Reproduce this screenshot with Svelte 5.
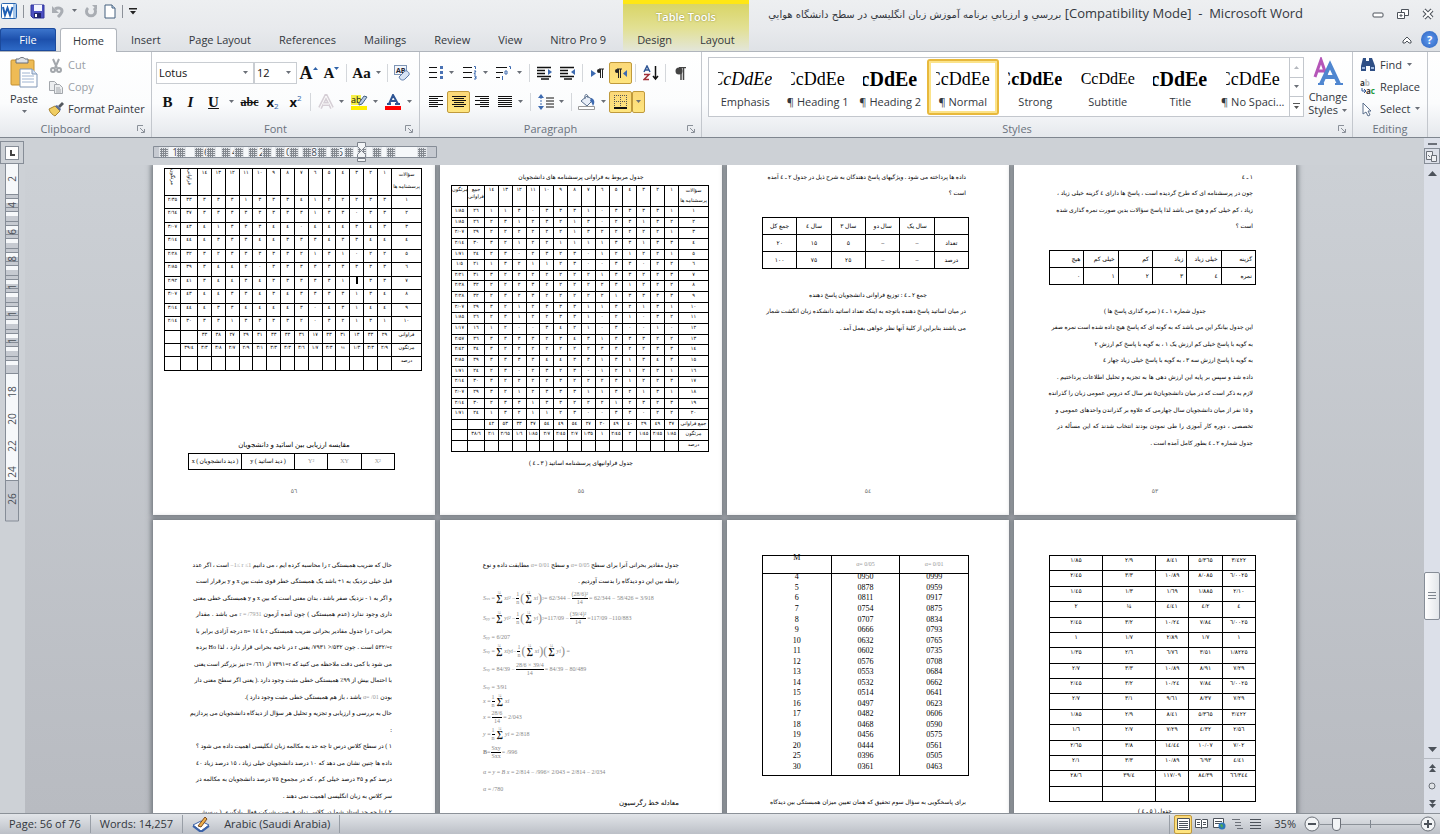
<script lang="ts">
	let zoom = $state(27);
	let fontName = $state('Lotus');
	let fontSize = $state('12');

	const tabs = ['Insert', 'Page Layout', 'References', 'Mailings', 'Review', 'View', 'Nitro Pro 9'];

	const styles = [
		{ name: 'Emphasis', look: 'italic' },
		{ name: '¶ Heading 1', look: '' },
		{ name: '¶ Heading 2', look: 'bold big' },
		{ name: '¶ Normal', look: '' },
		{ name: 'Strong', look: 'bold' },
		{ name: 'Subtitle', look: 'small' },
		{ name: 'Title', look: 'bold big' },
		{ name: '¶ No Spaci...', look: '' }
	];

	// columns run left to right, "-" is an empty cell
	const cells = (rows: string[]) => rows.map((r) => r.split(' ').map((c) => (c === '-' ? '' : c)));

	const students = cells([
		'٢/٣٥ ٣٣ ٣ ٣ ٣ ١ ٣ ٣ ٣ ٤ ١ ٢ ٢ ٢ ٣ ٣ ١',
		'٢/٦٤ ٣٧ ٣ ٣ ٣ ٣ ٣ ٣ ٣ ٣ ١ ٣ ٣ ٠ ٣ ٣ ٢',
		'٣/٠٧ ٤٣ ٤ ١ ٣ ٣ ٣ ٤ ٤ ٠ ٤ ٤ ٤ ٣ ٤ ٣ ٣',
		'٣/١٤ ٤٤ ٤ ٣ ٣ ٣ ٤ ٤ ٣ ٣ ٣ ٤ ٣ ٣ ٤ ٤ ٤',
		'٢/٢٨ ٣٢ ٣ ٢ ٣ ٣ ٣ ٣ ٣ ٢ ١ ٣ ١ ٠ ٢ ٢ ٥',
		'٢/٨٥ ٣٩ ٣ ٤ ٤ ٣ ٠ ٣ ٣ ٣ ٣ ٣ ٣ ٣ ٣ ٣ ٦',
		'٢/٩٢ ٤١ ٣ ٤ ٤ ٣ ٤ ٣ ٣ ٣ ٣ ٣ ١ | ٣ ٣ ٧',
		'٣/٠٧ ٤٣ ٤ ٤ ٣ ٣ ٤ ٣ ٤ ٣ ٣ ٣ ٣ ١ ٣ ٤ ٨',
		'٣/١٤ ٤٤ ٤ ٣ ٣ ٤ ٤ ٤ ٤ ٣ ٠ ٤ ٣ ١ ٤ ٤ ٩',
		'٢/١٤ ٣٠ ٣ ٣ ١ ٣ ٣ ٣ ٣ ٢ ٠ ٣ ٢ ١ ٣ ١ ١٠',
		'- - ٣٣ ٣٨ ٢٧ ٢٩ ٣١ ٣٣ ٣٣ ٣٦ ١٧ ٣٣ ٣١ ١٣ ٣٣ ٢٩ فراوانی',
		'- ٣٩/٤ ٣/٣ ٣/٨ ٢/٧ ٢/٩ ٣/١ ٣/٣ ٣/٣ ٣/٦ ١/٧ ٣/٣ ¼ ١/٣ ٣/٣ ٢/٩ مرتگون',
		'- - - - - - - - - - - - - - - - درصد'
	]);

	const teachers = cells([
		'١/٨٥ ٢٦ ١ ١ ٣ ٠ ٣ ٣ ٣ ١ ٠ ٣ ٣ ٣ ٣ ١ ١',
		'١/٨٥ ٢٦ ٢ ٣ ١ ٢ ٣ ٢ ١ ٣ ٠ ٢ ٣ ١ ٣ ٢ ٢',
		'٢/٠٧ ٢٩ ٢ ٢ ٢ ٢ ٢ ٢ ١ ٣ ٢ ٢ ٢ ٢ ٢ ١ ٣',
		'٢/١٤ ٣٠ ٣ ٢ ١ ٢ ٢ ١ ١ ١ ١ ٣ ٣ ١ ٣ ٣ ٤',
		'١/٧١ ٢٤ ٢ ٣ ٠ ٢ ٣ ٢ ٣ ٠ ١ ٢ ١ ٢ ٢ ١ ٥',
		'١/٥ ٢١ ١ ٣ ٢ ١ ١ ٢ ٣ ٠ ٠ ٣ ٣ ٠ ٢ ٢ ٦',
		'٢/٢١ ٣١ ٣ ٢ ٢ ٢ ٢ ٢ ٢ ٢ ١ ٣ ٣ ٢ ٢ ٣ ٧',
		'٢/٢٨ ٣٢ ٢ ٢ ٢ ٣ ٢ ٢ ٢ ٢ ٢ ٣ ١ ٢ ٢ ٢ ٨',
		'٢/٢٨ ٣٢ ٢ ٣ ٢ ٣ ٢ ٢ ٢ ٢ ٢ ١ ٣ ٣ ٣ ٣ ٩',
		'٢/٠٧ ٢٩ ٣ ٢ ١ ٢ ٣ ٣ ٣ ١ ١ ٣ ٢ ١ ٣ ١ ١٠',
		'١/٨٥ ٢٦ ٢ ٣ ١ ٢ ٢ ٣ ٣ ١ ٠ ٢ ١ ٠ ٣ ٢ ١١',
		'١/١٧ ١٦ ١ ٢ ٠ ٠ ٣ ٤ ٢ ١ ٠ ٣ ٠ ٠ ١ ٠ ١٢',
		'٢/٥٧ ٣٦ ٣ ٣ ٣ ٣ ٢ ٣ ٤ ٣ ١ ٣ ٣ ٣ ٢ ٢ ١٣',
		'٢/٤٢ ٣٤ ٣ ٢ ٢ ٢ ٢ ٢ ٢ ٢ ٣ ٣ ٢ ٢ ٣ ٣ ١٤',
		'٢/٨٥ ٣٩ ٣ ٣ ٣ ٣ ٤ ٤ ٣ ٣ ١ ٣ ١ ٣ ٤ ٣ ١٥',
		'١/٧١ ٢٤ ٢ ٣ ٠ ٢ ٣ ٢ ٣ ٠ ١ ٢ ١ ٢ ٢ ١ ١٦',
		'٢/١٤ ٣٠ ٣ ٢ ٢ ٢ ٢ ٣ ٢ ٢ ٢ ٣ ١ ٢ ٢ ٣ ١٧',
		'٢/٠٧ ٢٩ ٣ ٢ ١ ٢ ٣ ٣ ٣ ١ ١ ٣ ٢ ١ ٣ ١ ١٨',
		'٢/١٤ ٣٠ ٢ ٣ ٣ ١ ٣ ٣ ٢ ٢ ٢ ١ ٢ ٣ ٢ ٣ ١٩',
		'١/٧١ ٢٤ ١ ٣ ٢ ١ ١ ٢ ٣ ٠ ٠ ٣ ٣ ٠ ٢ ٢ ٢٠',
		'- - ٤٢ ٥٣ ٣٣ ٣٧ ٥٤ ٤٩ ٥٤ ٢٧ ٢٠ ٤٩ ٤٠ ٢٩ ٤٩ ٣٧ جمع_فراوانی',
		'- ٣٨/٦ ٢/١ ٢/٦٥ ١/٦ ١/٨٥ ٢/٧ ٢/٤٥ ٢/٧ ١/٣٥ ١ ٢/٤٥ ٢ ١/٤٥ ٢/٤٥ ١/٨٥ مرتگون',
		'- - - - - - - - - - - - - - - - درصد'
	]);

	const numbers = '١٤ ١٣ ١٢ ١١ ١٠ ٩ ٨ ٧ ٦ ٥ ٤ ٣ ٢ ١'.split(' ');

	const critical = cells([
		'4 0950 0999', '5 0878 0959', '6 0811 0917', '7 0754 0875', '8 0707 0834',
		'9 0666 0793', '10 0632 0765', '11 0602 0735', '12 0576 0708', '13 0553 0684',
		'14 0532 0662', '15 0514 0641', '16 0497 0623', '17 0482 0606', '18 0468 0590',
		'19 0456 0575', '20 0444 0561', '25 0396 0505', '30 0361 0463'
	]);

	const products = cells([
		'١/٨٥ ٢/٩ ٨/٤١ ٥/٣٦٥ ٣/٤٢٢',
		'٢/٤٥ ٣/٣ ١٠/٨٩ ٨/٠٨٥ ٦/٠٠٢٥',
		'١/٤٥ ١/٣ ١/٦٩ ١/٨٨٥ ٢/١٠',
		'٢ ¼ ٤/٤١ ٤/٢ ٤',
		'٢/٤٥ ٣/٢ ١٠/٢٤ ٧/٨٤ ٦/٠٠٢٥',
		'١ ١/٧ ٢/٨٩ ١/٧ ١',
		'١/٣٥ ٢/٦ ٦/٧٦ ٣/٥١ ١/٨٢٢٥',
		'٢/٧ ٣/٣ ١٠/٨٩ ٨/٩١ ٧/٢٩',
		'٢/٤٥ ٣/٢ ١٠/٢٤ ٧/٨٤ ٦/٠٠٢٥',
		'٢/٧ ٣/١ ٩/٦١ ٨/٣٧ ٧/٢٩',
		'١/٨٥ ٢/٩ ٨/٤١ ٥/٣٦٥ ٣/٤٢٢',
		'١/٦ ٢/٧ ٧/٢٩ ٤/٣٢ ٢/٥٦',
		'٢/٦٥ ٣/٨ ١٤/٤٤ ١٠/٠٧ ٧/٠٢',
		'٢/١ ٣/٣ ١٠/٨٩ ٦/٩٣ ٤/٤١',
		'٢٨/٦ ٣٩/٤ ١١٧/٠٩ ٨٤/٣٩ ٦٦/٣٤٤',
		'- - - - -'
	]);

	// horizontal ruler: column handles and the numbers between them
	const handles = [7, 24, 42, 54, 69, 82, 96, 110, 123, 137, 150, 165, 178, 192, 205, 220, 234, 265];
	const marks = [
		{ x: 22, t: '1' }, { x: 51, t: '16' }, { x: 79, t: '14' }, { x: 106, t: '12' },
		{ x: 133, t: '10' }, { x: 161, t: '8' }, { x: 187, t: '6' }
	];
	const steps = [
		{ y: 15, t: '2' }, { y: 41, t: '4' }, { y: 68, t: '6' }, { y: 95, t: '8' }, { y: 123, t: '1' },
		{ y: 150, t: '1' }, { y: 177, t: '1' }, { y: 228, t: '18' }, { y: 255, t: '20' },
		{ y: 282, t: '22' }, { y: 308, t: '24' }, { y: 335, t: '26' }
	];
	const stops = [30, 43, 57, 70, 84, 97, 111, 124, 138, 151, 165, 178, 192];
</script>

{#snippet arrow()}
	<svg class="arrow" width="7" height="4" viewBox="0 0 7 4"><path d="M1 0h5L3.5 3z" fill="#6b7078" /></svg>
{/snippet}

{#snippet launcher(label)}
	<button class="launcher" aria-label={label}>
		<svg width="8" height="8" viewBox="0 0 8 8" fill="none" stroke="#8a9099"><path d="M.5 6V.5H6M3 3l4 4M7.500 4v3.500H4" /></svg>
	</button>
{/snippet}

{#snippet bars(d)}
	<svg width="16" height="14" viewBox="0 0 16 14" stroke="#111"><path {d} /></svg>
{/snippet}

{#snippet grid(rows, kind)}
	<table class="grid wide {kind}">
		<colgroup>
			<col class="c16" /><col class="c17" />
			{#each numbers as _}<col />{/each}
			<col class="c30" />
		</colgroup>
		<thead>
			<tr>
				<th><span>مرتگون</span></th>
				<th><span>{kind === 'tall' ? 'فراوانی' : 'جمع فراوانی'}</span></th>
				{#each numbers as n}<th>{n}</th>{/each}
				<th class="last">سؤالات<br />پرسشنامه ها</th>
			</tr>
		</thead>
		<tbody>
			{#each rows as row}
				<tr>
					{#each row as c}
						<td>{#if c === '|'}<i class="caret"></i>{:else}{c.replace('_', ' ')}{/if}</td>
					{/each}
				</tr>
			{/each}
		</tbody>
	</table>
{/snippet}

{#snippet frac(a, b)}
	<span class="frac"><span>{a}</span><span>{b}</span></span>
{/snippet}

{#snippet sum()}
	<span class="sum"><small>14</small><b>∑</b><small>i=1</small></span>
{/snippet}

<div class="word">
	<header class="title">
		<div class="quick">
			<svg width="16" height="16" viewBox="0 0 16 16"><rect x=".5" y=".5" width="15" height="15" rx="1" fill="#fff" stroke="#2a66b0" /><path d="M12 1h3v14h-3z" fill="#a9c8ea" /><path d="M2 4l2 8 2.500-7L9 12l2.500-8" fill="none" stroke="#1f5fb4" stroke-width="2" /></svg>
			<i class="bar"></i>
			<button aria-label="Save"><svg width="15" height="15" viewBox="0 0 15 15"><path d="M1 1h13v13H3l-2-2z" fill="#4b4fc0" stroke="#32369c" /><path d="M4 1h8v6H4z" fill="#f4f6ff" /><path d="M4 9h7v5H4z" fill="#20246c" /><path d="M5 10h2v3H5z" fill="#fff" /></svg></button>
			<button aria-label="Undo"><svg width="14" height="13" viewBox="0 0 14 13" fill="none" stroke="#a9adb3" stroke-width="3"><path d="M4 4c3-2 7-1 7 2 0 2-2 4-4 6" /><path d="M1 1v7h7z" fill="#a9adb3" stroke="none" /></svg></button>
			{@render arrow()}
			<button aria-label="Redo"><svg width="14" height="13" viewBox="0 0 14 13" fill="none" stroke="#a9adb3" stroke-width="3"><path d="M4 3a4.500 4.500 0 1 0 6 0" /><path d="M8 0h5v5z" fill="#a9adb3" stroke="none" /></svg></button>
			<button aria-label="New"><svg width="12" height="15" viewBox="0 0 12 15"><path d="M1 1h7l3 3v10H1z" fill="#fff" stroke="#44617f" /><path d="M8 1v3h3" fill="#cfe0f4" stroke="#44617f" /></svg></button>
			<i class="bar"></i>
			<button aria-label="Customize"><svg width="8" height="7" viewBox="0 0 8 7"><path d="M0 0h8v1.500H0zM1 3h6L4 6.500z" fill="#222" /></svg></button>
		</div>
		<h1><span dir="rtl">بررسي و ارزيابي برنامه آموزش زبان انگليسي در سطح دانشگاه هوايي</span> [Compatibility Mode]&nbsp; -&nbsp; Microsoft Word</h1>
		<div class="window">
			<button aria-label="Minimize"><svg width="12" height="12" viewBox="0 0 12 12"><rect x="1" y="5" width="10" height="4" rx="1" fill="#fff" stroke="#4c525a" /></svg></button>
			<button aria-label="Restore"><svg width="12" height="12" viewBox="0 0 12 12" fill="#fff" stroke="#4c525a"><path d="M4.500 1.500h7v6h-7z" /><path d="M.5 4.500h7v6h-7z" /><path d="M3 7h2v1H3z" /></svg></button>
			<button aria-label="Close"><svg width="12" height="12" viewBox="0 0 12 12"><path d="M2 2l8 8M10 2l-8 8" stroke="#4c525a" stroke-width="4" /><path d="M2 2l8 8M10 2l-8 8" stroke="#fff" stroke-width="2" /></svg></button>
		</div>
	</header>

	<nav class="tabs">
		<button class="file">File</button>
		<button class="home">Home</button>
		{#each tabs as t}<button>{t}</button>{/each}
		<div class="context">
			<div class="tools">Table Tools</div>
			<button>Design</button>
			<button>Layout</button>
		</div>
		<div class="help">
			<button aria-label="Minimize ribbon"><svg width="10" height="8" viewBox="0 0 10 8"><path d="M1 5l4-4 4 4v2H7L5 5 3 7H1z" fill="#fff" stroke="#4c525a" /></svg></button>
			<button class="q" aria-label="Help">?</button>
		</div>
	</nav>

	<section class="ribbon">
		<div class="group clipboard">
			<div class="body">
				<button class="large">
					<svg width="28" height="31" viewBox="0 0 28 31"><rect x="1" y="3" width="23" height="25" rx="1" fill="#eebb55" stroke="#c48f2e" /><path d="M6 2h3c1-2 5-2 6 0h3v4H6z" fill="#dfe2e6" stroke="#6b7078" /><path d="M10 12h12l5 5v13H10z" fill="#fff" stroke="#7f95b5" /><path d="M22 12v5h5" fill="#d6e3f5" stroke="#7f95b5" /><path d="M12 16h8M12 19h12M12 22h12M12 25h12" stroke="#9fb4d2" /></svg>
					<span>Paste</span>
					{@render arrow()}
				</button>
				<div class="stack">
					<button class="off"><svg width="16" height="15" viewBox="0 0 16 15" fill="none" stroke="#a3a7ac" stroke-width="2"><path d="M5 1l4 9M11 1L7 10" /><circle cx="5" cy="12" r="2" /><circle cx="11" cy="12" r="2" /></svg>Cut</button>
					<button class="off"><svg width="16" height="15" viewBox="0 0 16 15" fill="#eceef0" stroke="#a3a7ac"><path d="M1.500 1.500h5l3 3v6h-8z" /><path d="M6.500 4.500h5l3 3v6h-8zM8 8h4M8 10h5M8 12h5" /></svg>Copy</button>
					<button><svg width="16" height="15" viewBox="0 0 16 15"><path d="M1 7l6-3 5 5-5 5c-2-1-5-3-6-7z" fill="#f0cd62" stroke="#a98430" /><path d="M7 4l2-1 4 4-1 2z" fill="#5a6f9c" /><path d="M10 4l4-4 2 2-4 4z" fill="#53575d" /></svg>Format Painter</button>
				</div>
			</div>
			<footer>Clipboard{@render launcher('Clipboard options')}</footer>
		</div>

		<div class="group font">
			<div class="body rows">
				<div class="row">
					<label class="combo name"><input aria-label="Font" bind:value={fontName} />{@render arrow()}</label>
					<label class="combo size"><input aria-label="Font size" bind:value={fontSize} />{@render arrow()}</label>
					<button class="tool serif grow" aria-label="Grow font"><b>A</b><svg width="5" height="3" viewBox="0 0 5 3"><path d="M0 3h5L2.500 0z" fill="#2f62a8" /></svg></button>
					<button class="tool serif shrink" aria-label="Shrink font"><b>A</b><svg width="5" height="3" viewBox="0 0 5 3"><path d="M0 0h5L2.500 3z" fill="#2f62a8" /></svg></button>
					<i class="sep"></i>
					<button class="tool split serif case"><b>Aa</b>{@render arrow()}</button>
					<i class="sep"></i>
					<button class="tool" aria-label="Clear formatting"><svg width="17" height="16" viewBox="0 0 17 16"><rect x=".5" y=".5" width="12" height="9" fill="#f2f6fc" stroke="#7f95b5" /><text x="2" y="8" font-size="7" font-weight="bold" fill="#223">AB</text><path d="M5 12l6-6c2-1 5 2 4 4l-4 4c-2 2-5 1-6-2z" fill="#d8e3f4" stroke="#5a78a8" /></svg></button>
				</div>
				<div class="row">
					<button class="tool serif"><b>B</b></button>
					<button class="tool serif"><i><b>I</b></i></button>
					<button class="tool serif"><u><b>U</b></u></button>
					<button class="tool drop" aria-label="Underline style">{@render arrow()}</button>
					<button class="tool serif abc"><s><b>abc</b></s></button>
					<button class="tool script"><b>x</b><sub>2</sub></button>
					<button class="tool script"><b>x</b><sup>2</sup></button>
					<i class="sep"></i>
					<button class="tool split off" aria-label="Text effects"><svg width="16" height="16" viewBox="0 0 16 16"><path d="M2 14L8 2l6 12M5 10h6" fill="none" stroke="#d6cfd6" stroke-width="4" /><path d="M2 14L8 2l6 12M5 10h6" fill="none" stroke="#fff" /></svg>{@render arrow()}</button>
					<button class="tool split" aria-label="Highlight"><svg width="17" height="16" viewBox="0 0 17 16"><path d="M0 1h10v10H0z" fill="#f6f04a" /><text x="0" y="9" font-size="9" fill="#111">ab</text><path d="M8 9l5-7 3 1-5 7-3 1z" fill="#b9cbe6" stroke="#44617f" /><path d="M0 12h16v4H0z" fill="#ffee00" /></svg>{@render arrow()}</button>
					<button class="tool split" aria-label="Font color"><svg width="17" height="16" viewBox="0 0 17 16"><path d="M4 10L8 1l5 9M6 7h5M2 10h4M10 10h5" fill="none" stroke="#2f5594" stroke-width="2" /><path d="M0 12h16v4H0z" fill="#f00" /></svg>{@render arrow()}</button>
				</div>
			</div>
			<footer>Font{@render launcher('Font options')}</footer>
		</div>

		<div class="group para">
			<div class="body rows">
				<div class="row">
					<button class="tool split" aria-label="Bullets"><svg width="16" height="14" viewBox="0 0 16 14"><path d="M1 1.500h8M1 6.500h8M1 11.500h8" stroke="#111" /><path d="M12 0h3v3h-3zM12 5h3v3h-3zM12 10h3v3h-3z" fill="#4a72b4" /></svg>{@render arrow()}</button>
					<button class="tool split" aria-label="Numbering"><svg width="16" height="14" viewBox="0 0 16 14"><path d="M1 1.500h9M1 6.500h9M1 11.500h9" stroke="#111" /><path d="M12 .5h1.500V3M12 5h2l-2 3h2M12 10h2v1.500h-1 1V13h-2" fill="none" stroke="#3d6ab0" /></svg>{@render arrow()}</button>
					<button class="tool split" aria-label="Multilevel list"><svg width="16" height="14" viewBox="0 0 16 14"><path d="M0 1.500h11M0 6.500h7M0 11.500h4" stroke="#111" /><path d="M13 .5h1.500V3M9 5h2v3H9zM6.500 10v4" fill="none" stroke="#3d6ab0" /></svg>{@render arrow()}</button>
					<i class="sep"></i>
					<button class="tool" aria-label="Decrease indent"><svg width="17" height="14" viewBox="0 0 17 14"><path d="M1 1.500h14M1 4.500h8M1 7.500h8M1 10.500h14M5 13h8" stroke="#111" stroke-width="1.500" /><path d="M12 3l4 3-4 3z" fill="#3d6ab0" /></svg></button>
					<button class="tool" aria-label="Increase indent"><svg width="17" height="14" viewBox="0 0 17 14"><path d="M1 1.500h14M1 4.500h8M1 7.500h8M1 10.500h14M5 13h8" stroke="#111" stroke-width="1.500" /><path d="M16 3l-4 3 4 3z" fill="#3d6ab0" /></svg></button>
					<i class="sep"></i>
					<button class="tool" aria-label="Left to right"><svg width="13" height="11" viewBox="0 0 13 11"><path d="M0 2l5 3.500L0 9z" fill="#3d6ab0" /><path d="M8 1h5M9.500 1v9M11.500 1v9" stroke="#222" /><circle cx="8" cy="3" r="2" fill="#222" /></svg></button>
					<button class="tool on" aria-label="Right to left"><svg width="13" height="11" viewBox="0 0 13 11"><path d="M13 2L9 5.500 13 9z" fill="#3d6ab0" /><path d="M3 1h5M4.500 1v9M6.500 1v9" stroke="#222" /><circle cx="3" cy="3" r="2" fill="#222" /></svg></button>
					<i class="sep"></i>
					<button class="tool" aria-label="Sort"><svg width="16" height="16" viewBox="0 0 16 16" fill="none"><path d="M1 7l3-6 3 6M2 5h4" stroke="#2f5594" stroke-width="1.500" /><path d="M1 9.500h5l-5 5h5" stroke="#a03038" stroke-width="1.500" /><path d="M12.500 1v13M10 11l2.500 3 2.500-3" stroke="#111" stroke-width="1.500" /></svg></button>
					<i class="sep"></i>
					<button class="tool" aria-label="Show marks"><svg width="11" height="13" viewBox="0 0 11 13"><path d="M4 .5h7M6 1v12M8.500 1v12" stroke="#444" stroke-width="1.500" /><circle cx="4" cy="4" r="3.500" fill="#444" /></svg></button>
				</div>
				<div class="row">
					<button class="tool" aria-label="Align left">{@render bars('M1 1.500h14M1 3.500h9M1 5.500h14M1 7.500h9M1 9.500h14M1 11.500h9')}</button>
					<button class="tool on" aria-label="Center">{@render bars('M1 1.500h14M3 3.500h10M1 5.500h14M3 7.500h10M1 9.500h14M3 11.500h10')}</button>
					<button class="tool" aria-label="Align right">{@render bars('M1 1.500h14M6 3.500h9M1 5.500h14M6 7.500h9M1 9.500h14M6 11.500h9')}</button>
					<button class="tool split" aria-label="Justify">{@render bars('M1 1.500h14M1 3.500h14M1 5.500h14M1 7.500h14M1 9.500h14M1 11.500h14')}{@render arrow()}</button>
					<i class="sep"></i>
					<button class="tool split" aria-label="Line spacing"><svg width="16" height="16" viewBox="0 0 16 16"><path d="M0 4l3-4 3 4zM0 12l3 4 3-4z" fill="#3d6ab0" /><path d="M3 3v10" stroke="#3d6ab0" stroke-dasharray="2 1" /><path d="M8 4h8M8 7h8M8 10h8M8 13h8" stroke="#111" /></svg>{@render arrow()}</button>
					<i class="sep"></i>
					<button class="tool split" aria-label="Shading"><svg width="18" height="16" viewBox="0 0 18 16"><path d="M3 7l6-5 6 4-6 6z" fill="#e8eef8" stroke="#5a6f8c" /><path d="M7 5c-1-6 3-6 3-1" fill="none" stroke="#5a6f8c" /><path d="M13 4c4 1 4 5 2 8-1-2-1-4-3-5z" fill="#3d6ab0" /><path d="M.5 12.500h16v3H.5z" fill="#fff" stroke="#999" /></svg>{@render arrow()}</button>
					<button class="tool on" aria-label="Borders"><svg width="14" height="14" viewBox="0 0 14 14"><path d="M.5 0v13M6.500 0v13M12.500 0v13M0 .5h13M0 6.500h13" stroke="#555" stroke-dasharray="1 1" /><path d="M0 13h13" stroke="#111" stroke-width="2" /></svg></button>
					<button class="tool on drop" aria-label="Border style">{@render arrow()}</button>
				</div>
			</div>
			<footer>Paragraph{@render launcher('Paragraph options')}</footer>
		</div>

		<div class="group styles">
			<div class="body">
				<div class="gallery">
					{#each styles as s}
						<button class="style" class:picked={s.name === '¶ Normal'}>
							<span class="look {s.look}">CcDdEe</span>
							<span>{s.name}</span>
						</button>
					{/each}
					<div class="scroller">
						<button class="off" aria-label="Previous styles"><svg width="7" height="4" viewBox="0 0 7 4"><path d="M1 4h5L3.500 1z" fill="#b4b8be" /></svg></button>
						<button aria-label="Next styles">{@render arrow()}</button>
						<button aria-label="More styles"><svg width="7" height="7" viewBox="0 0 7 7"><path d="M0 0h7v1H0zM1 3h5L3.500 6z" fill="#555" /></svg></button>
					</div>
				</div>
				<button class="large change">
					<svg width="30" height="30" viewBox="0 0 30 30" fill="none"><path d="M2 20L8 3l6 17M4 14h8" stroke="#b455b8" stroke-width="3" /><path d="M8 27L17 8l9 19M11 20h12" stroke="#4f86d0" stroke-width="4" /><path d="M5 27h6M22 27h8" stroke="#4f86d0" stroke-width="2" /></svg>
					<span>Change<br />Styles {@render arrow()}</span>
				</button>
			</div>
			<footer>Styles{@render launcher('Styles options')}</footer>
		</div>

		<div class="group editing">
			<div class="body">
				<div class="stack">
					<button><svg width="16" height="14" viewBox="0 0 16 14"><path d="M3 0h3v3h3V0h3l3 8v5h-5V8H6v5H1V8z" fill="#2f4f86" /><path d="M2 9h3v2H2zM11 9h3v2h-3z" fill="#9db7e0" /></svg>Find {@render arrow()}</button>
					<button><svg width="16" height="16" viewBox="0 0 16 16" font-size="8" font-weight="bold"><text x="0" y="7" fill="#333">a<tspan fill="#bbb">b</tspan></text><text x="6" y="15" fill="#333">a<tspan fill="#1d9a3c">c</tspan></text><path d="M2 9v3h3M4 10l2 2-2 2" fill="none" stroke="#2f5594" /></svg>Replace</button>
					<button><svg width="16" height="15" viewBox="0 0 16 15"><path d="M3 1l8 8H8l2 4-2 1-2-4-3 2z" fill="#fff" stroke="#5a6f8c" /></svg>Select {@render arrow()}</button>
				</div>
			</div>
			<footer>Editing</footer>
		</div>
	</section>

	<main class="work">
		<aside class="side">
			<div class="corner"><span></span></div>
			<svg class="vruler" width="15" height="358" viewBox="0 0 15 358">
				<path d="M.5 0h13v357H.5z" fill="#c6cad1" stroke="#868d97" />
				<path d="M1 0h12v30H1zM1 210h12v106H1z" fill="#f6f8fa" />
				{#each stops as y}
					<path d="M1 {y + 4}h12v5H1z" fill="#f6f8fa" />
					<path d="M0 {y}.500h14M0 {y + 4}.500h14" stroke="#868d97" />
				{/each}
				<path d="M0 209.500h14M0 316.500h14" stroke="#868d97" />
				{#each steps as s}
					<text transform="translate(11 {s.y}) rotate(-90)" text-anchor="middle" font-size="10" fill="#4a4f57">{s.t}</text>
				{/each}
			</svg>
		</aside>

		<div class="desk">
			<div class="rulerrow">
				<svg class="hruler" width="284" height="20" viewBox="0 0 284 20">
					<path d="M.5 4.500h283v11H.5z" fill="#c6cad1" stroke="#868d97" />
					<path d="M14 5h256v10H14z" fill="#f6f8fa" />
					{#each marks as m}
						<text x={m.x} y="14" text-anchor="middle" font-size="10" fill="#4a4f57">{m.t}</text>
					{/each}
					{#each handles as x}
						<path d="M{x - 1} 5h10v10h-10z" fill="#e2e5e9" />
						<path d="M{x} 7.500h8M{x} 9.500h8M{x} 11.500h8M{x} 13.500h8M{x + 1}.500 6v9M{x + 3}.500 6v9M{x + 5}.500 6v9" stroke="#5b616a" stroke-width="1" opacity=".7" />
					{/each}
					<path d="M204.500.500h8v4l-4 4-4-4zM208.500 8.500l4 4v3h-8v-3zM204.500 16.500h8v3h-8z" fill="#f2f4f6" stroke="#7c828b" />
				</svg>
			</div>

			<div class="pages" dir="ltr">
				<article class="page">
					{@render grid(students, 'tall')}
					<p class="heading compare">مقایسه ارزیابی بین اساتید و دانشجویان</p>
					<table class="grid mid">
						<colgroup><col class="c53" /><col class="c53" /><col /><col /><col /></colgroup>
						<tbody><tr><td dir="rtl">( دید دانشجویان ) x</td><td dir="rtl">( دید اساتید ) y</td><td class="math">Y²</td><td class="math">XY</td><td class="math">X²</td></tr></tbody>
					</table>
					<footer>٥٦</footer>
				</article>

				<article class="page">
					<p class="center first">جدول مربوط به فراوانی پرسشنامه های دانشجویان</p>
					{@render grid(teachers, 'dense')}
					<p class="center after">جدول فراوانیهای پرسشنامه اساتید ( ٣ ـ ٤ )</p>
					<footer>٥٥</footer>
				</article>

				<article class="page">
					<div class="text first">
						<p>داده ها پرداخته می شود . ویژگیهای پاسخ دهندگان به شرح ذیل در جدول ٢ ـ ٤ آمده</p>
						<p class="end">است ؟</p>
					</div>
					<table class="grid mid years">
						<tbody>
							<tr><td>جمع کل</td><td>سال ٤</td><td>سال ٣</td><td>سال دو</td><td>سال یک</td><td></td></tr>
							<tr><td>٢٠</td><td>١٥</td><td>٥</td><td>–</td><td>–</td><td>تعداد</td></tr>
							<tr><td>١٠٠</td><td>٧٥</td><td>٢٥</td><td>–</td><td>–</td><td>درصد</td></tr>
						</tbody>
					</table>
					<div class="text second">
						<p class="center">جمع ٢ ـ ٤ : توزیع فراوانی دانشجویان پاسخ دهنده</p>
						<p>در میان اساتید پاسخ دهنده باتوجه به اینکه تعداد اساتید دانشکده زبان انگشت شمار</p>
						<p class="end">می باشند بنابراین از کلیهٔ آنها نظر خواهی بعمل آمد .</p>
					</div>
					<footer>٥٤</footer>
				</article>

				<article class="page">
					<div class="text first">
						<p class="end">١ ـ ٤</p>
						<p>چون در پرسشنامه ای که طرح گردیده است ، پاسخ ها دارای ٤ گزینه خیلی زیاد ،</p>
						<p>زیاد ، کم خیلی کم و هیچ می باشد لذا پاسخ سؤالات بدین صورت نمره گذاری شده</p>
						<p class="end">است ؟</p>
					</div>
					<table class="grid mid years score">
						<tbody>
							<tr><td>هیچ</td><td>خیلی کم</td><td>کم</td><td>زیاد</td><td>خیلی زیاد</td><td>گزینه</td></tr>
							<tr><td>٠</td><td>١</td><td>٢</td><td>٣</td><td>٤</td><td>نمره</td></tr>
						</tbody>
					</table>
					<div class="text second">
						<p class="center">جدول شماره ١ ـ ٤ ( نمره گذاری پاسخ ها )</p>
						<p>این جدول بیانگر این می باشد که به گونه ای که پاسخ هیچ داده شده است نمره صفر</p>
						<p class="end">به گویه با پاسخ خیلی کم ارزش یک ١ ، به گویه با پاسخ کم ارزش ٢</p>
						<p class="end">به گویه با پاسخ ارزش سه ٣ ، به گویه با پاسخ خیلی زیاد چهار ٤</p>
						<p>داده شد و سپس بر پایه این ارزش دهی ها به تجزیه و تحلیل اطلاعات پرداختیم .</p>
						<p>لازم به ذکر است که در میان دانشجویان٥ نفر سال که دروس عمومی زبان را گذرانده</p>
						<p>و ١٥ نفر از میان دانشجویان سال چهارمی که علاوه بر گذراندن واحدهای عمومی و</p>
						<p>تخصصی ، دوره کار آموزی را طی نمودن بودند انتخاب شدند که این مسأله در</p>
						<p class="end">جدول شماره ٢ ـ ٤ بطور کامل آمده است .</p>
					</div>
					<footer>٥٣</footer>
				</article>

				<article class="page next">
					<div class="text">
						<p>حال که ضریب همبستگی r را محاسبه کرده ایم ، می دانیم <em>−1≤ r ≤1</em> است ، اگر عدد</p>
						<p>قبل خیلی نزدیک به ١+ باشد یک همبستگی خطر قوی مثبت بین x و y برقرار است</p>
						<p>و اگر به ١ - نزدیک صفر باشد ، بدان معنی است که بین x و y همبستگی خطی معنی</p>
						<p>داری وجود ندارد (عدم همبستگی ) چون آمده آزمون <em>r = /7931</em> می باشد . مقدار</p>
						<p>بحرانی r را جدول مقادیر بحرانی ضریب همبستگی r با ١٤ =n درجه آزادی برابر با</p>
						<p>r=/٥٣٢ است . چون ٥٣٢/&lt; ٧٩٣١/ یعنی r در ناحیه بحرانی قرار دارد ، لذا Ho برده</p>
						<p>می شود با کمی دقت ملاحظه می کنید که r=٧٣٩١ از ٦٦١/ =r نیز بزرگتر است یعنی</p>
						<p>با احتمال بیش از ٩٩٪ همبستگی خطی مثبت وجود دارد .( یعنی اگر سطح معنی دار</p>
						<p class="end">بودن <em>α= /01</em> باشد ، باز هم همبستگی خطی مثبت وجود دارد ).</p>
						<p>حال به بررسی و ارزیابی و تجزیه و تحلیل هر سؤال از دیدگاه دانشجویان می پردازیم</p>
						<p class="end">:</p>
						<p>١ ) در سطح کلاس درس تا چه حد به مکالمه زبان انگلیسی اهمیت داده می شود ؟</p>
						<p>داده ها چنین نشان می دهد که ١٠ درصد دانشجویان خیلی زیاد ، ١٥ درصد زیاد ٤٠</p>
						<p>درصد کم و ٣٥ درصد خیلی کم ، که در مجموع ٧٥ درصد دانشجویان به مکالمه در</p>
						<p class="end">سر کلاس به زبان انگلیسی اهمیت نمی دهند .</p>
						<p>٢ ) تا چه حد استاد شما در کلاس زبان فرصت شرکت فعال یادگیری ( پرسش ـ</p>
					</div>
				</article>

				<article class="page next">
					<div class="text">
						<p>جدول مقادیر بحرانی آنرا برای سطح <em>α= 0/05</em> و سطح <em>α= 0/01</em> مطابقت داده و نوع</p>
						<p class="end">رابطه بین این دو دیدگاه را بدست آوردیم .</p>
					</div>
					<div class="equations">
						<div><i>S</i><sub>xx</sub> ={@render sum()} <i>xi²</i> −{@render frac('1', 'n')}<q>(</q>{@render sum()} <i>xi</i><q>)</q><sup>2</sup>= 62/344 −{@render frac('(28/6)²', '14')}= 62/344 − 58/426 = 3/918</div>
						<div><i>S</i><sub>yy</sub> ={@render sum()} <i>yi²</i> −{@render frac('1', 'n')}<q>(</q>{@render sum()} <i>yi</i><q>)</q><sup>2</sup>=117/09 −{@render frac('(39/4)²', '14')}=117/09 −110/883</div>
						<div><i>S</i><sub>yy</sub> = 6/207</div>
						<div><i>S</i><sub>xy</sub> ={@render sum()} <i>xiyi</i>−{@render frac('1', 'n')}<q>(</q>{@render sum()} <i>xi</i><q>)(</q>{@render sum()} <i>yi</i><q>)</q> =</div>
						<div><i>S</i><sub>xy</sub> = 84/39 −{@render frac('28/6 × 39/4', '14')}= 84/39 − 80/489</div>
						<div><i>S</i><sub>xy</sub> = 3/91</div>
						<div><i>x</i> ={@render frac('1', 'n')}{@render sum()} <i>xi</i></div>
						<div><i>x</i> ={@render frac('28/6', '14')}= 2/043</div>
						<div><i>y</i> ={@render frac('1', 'n')}{@render sum()} <i>yi</i> = 2/818</div>
						<div><b>B</b>={@render frac('Sxy', 'Sxx')}= /996</div>
						<div>α = <i>y</i> = <i>B x</i> = 2/814 − /996× 2/043 = 2/814 − 2/034</div>
						<div>α = /780</div>
					</div>
					<p class="heading end">معادله خط رگرسیون</p>
				</article>

				<article class="page next tabled">
					<table class="grid critical">
						<thead><tr><th>M</th><th class="math">α= 0/05</th><th class="math">α= 0/01</th></tr></thead>
						<tbody>
							{#each critical as row}<tr>{#each row as c}<td>{c}</td>{/each}</tr>{/each}
						</tbody>
					</table>
					<div class="text second"><p>برای پاسخگویی به سؤال سوم تحقیق که همان تعیین میزان همبستگی بین دیدگاه</p></div>
				</article>

				<article class="page next tabled">
					<table class="grid products">
						<colgroup><col class="c53" /><col class="c53" /><col /><col /><col /></colgroup>
						<tbody>
							{#each products as row}<tr>{#each row as c}<td>{c}</td>{/each}</tr>{/each}
						</tbody>
					</table>
					<p class="center first">جدول ( ٥ ـ ٤ )</p>
				</article>
			</div>
		</div>

		<aside class="scroll">
			<i class="splitter"></i>
			<button class="browse" aria-label="Ruler"><svg width="13" height="13" viewBox="0 0 13 13" fill="#eef0f3" stroke="#6b7078"><path d="M1.500 1.500h6v8h-6zM3 5l2 2" /><path d="M6.500 5.500h5v6h-5z" /></svg></button>
			<button aria-label="Up"><svg width="9" height="5" viewBox="0 0 9 5"><path d="M0 5h9L4.500 0z" fill="#4c525a" /></svg></button>
			<div class="track"><div class="thumb"></div></div>
			<button aria-label="Down"><svg width="9" height="5" viewBox="0 0 9 5"><path d="M0 0h9L4.500 5z" fill="#4c525a" /></svg></button>
			<div class="jump">
				<button aria-label="Previous page"><svg width="7" height="8" viewBox="0 0 7 8"><path d="M0 4h7L3.500 0zM0 8h7L3.500 4z" fill="#4c525a" /></svg></button>
				<button aria-label="Browse object"><svg width="8" height="8" viewBox="0 0 8 8"><circle cx="4" cy="4" r="3" fill="#dfe2e6" stroke="#6b7078" /></svg></button>
				<button aria-label="Next page"><svg width="7" height="8" viewBox="0 0 7 8"><path d="M0 0h7L3.500 4zM0 4h7L3.500 8z" fill="#4c525a" /></svg></button>
			</div>
		</aside>
	</main>

	<footer class="status">
		<button class="item">Page: 56 of 76</button>
		<button class="item">Words: 14,257</button>
		<button class="item lang">
			<svg width="18" height="16" viewBox="0 0 18 16"><path d="M1 9l8-4 8 4-8 6z" fill="#fff" stroke="#3b62a8" /><path d="M1 10l8 6 8-6" fill="none" stroke="#3b62a8" stroke-width="2" /><path d="M6 10l7-9 2 2-6 8z" fill="#f0b04a" stroke="#7a4a20" /></svg>
			Arabic (Saudi Arabia)
		</button>
		<div class="views">
			<button class="view on" aria-label="Print layout"><svg width="13" height="12" viewBox="0 0 13 12"><path d="M.5.500h12v11H.5z" fill="#fff" stroke="#4c525a" /><path d="M2 3.500h9M2 5.500h9M2 7.500h9M2 9.500h9" stroke="#4c525a" /></svg></button>
			<button class="view" aria-label="Reading"><svg width="13" height="12" viewBox="0 0 13 12" stroke="#4c525a"><path d="M.5 1.500h5l1 1 1-1h5v8h-5l-1 1-1-1h-5z" fill="#fff" /><path d="M6.500 2v9M2 4.500h3M2 6.500h3M8 4.500h3M8 6.500h3" /></svg></button>
			<button class="view" aria-label="Web layout"><svg width="13" height="12" viewBox="0 0 13 12"><path d="M.5.500h10v9H.5z" fill="#fff" stroke="#4c525a" /><path d="M2 3.500h7M2 5.500h5" stroke="#4c525a" /><circle cx="9" cy="8" r="3.500" fill="#2c78b8" /><path d="M7 7l2-1 1 2-1 2z" fill="#4fb04a" /></svg></button>
			<button class="view" aria-label="Outline"><svg width="13" height="12" viewBox="0 0 13 12" stroke="#6b7078"><path d="M1 1.500h8M4 4.500h6M4 7.500h6M6 10.500h6" /></svg></button>
			<button class="view" aria-label="Draft"><svg width="13" height="12" viewBox="0 0 13 12" stroke="#4c525a"><path d="M1 1.500h11M1 4.500h11M1 7.500h11M1 10.500h11" /></svg></button>
		</div>
		<span class="percent">35%</span>
		<button class="round" aria-label="Zoom out"><svg width="16" height="16" viewBox="0 0 16 16"><circle cx="8" cy="8" r="7" fill="#f2f4f6" stroke="#6b7078" /><path d="M4 8h8" stroke="#4c525a" stroke-width="2" /></svg></button>
		<input type="range" aria-label="Zoom" min="0" max="200" bind:value={zoom} />
		<button class="round" aria-label="Zoom in"><svg width="16" height="16" viewBox="0 0 16 16"><circle cx="8" cy="8" r="7" fill="#f2f4f6" stroke="#6b7078" /><path d="M4 8h8M8 4v8" stroke="#4c525a" stroke-width="2" /></svg></button>
	</footer>
</div>

<style>
	:global(body) {
		margin: 0;
	}

	.word {
		display: flex;
		flex-direction: column;
		height: 100vh;
		overflow: hidden;
		font-family: 'Open Sans', 'DejaVu Sans', sans-serif;
		font-size: 11px;
		line-height: 16px;
		color: #33373d;
		background: #e3e6ea;
	}

	button {
		display: flex;
		align-items: center;
		padding: 0;
		border: 0;
		background: none;
		font: inherit;
		color: inherit;
		white-space: nowrap;
	}

	svg {
		flex: none;
		display: block;
	}

	p,
	h1 {
		margin: 0;
		font-weight: normal;
	}

	/* title bar */
	.title {
		display: flex;
		align-items: center;
		height: 28px;
		padding: 0 6px 0 1px;
		background: linear-gradient(#edeff1, #e8eaed);
	}

	.quick {
		display: flex;
		align-items: center;
		gap: 6px;
		padding-bottom: 6px;
	}

	.bar {
		width: 1px;
		height: 13px;
		background: #8c9199;
	}

	h1 {
		margin-left: auto;
		font-size: 13px;
		white-space: nowrap;
	}

	h1 span {
		font-family: 'DejaVu Sans', sans-serif;
		font-size: 10px;
		unicode-bidi: isolate;
	}

	.window {
		display: flex;
		gap: 13px;
		margin-left: 69px;
	}

	/* tabs */
	.tabs {
		display: flex;
		height: 24px;
		background: linear-gradient(#e8eaed, #dfe2e6);
		border-bottom: 1px solid #b0b5bc;
		box-sizing: border-box;
	}

	.tabs button {
		padding: 0 14px;
	}

	.tabs .file {
		width: 56px;
		justify-content: center;
		border-radius: 3px 3px 0 0;
		background: linear-gradient(#3f78cf, #1d50ac 50%, #2f6cc9);
		box-shadow: inset 0 0 0 1px #1c4a9c;
		color: #fff;
	}

	.tabs .home {
		width: 57px;
		height: 25px;
		margin-left: 4px;
		justify-content: center;
		border: 1px solid #b0b5bc;
		border-bottom: 0;
		border-radius: 3px 3px 0 0;
		background: #fff;
	}

	.context {
		position: relative;
		display: flex;
		margin-left: 3px;
		background: linear-gradient(#e2e093, #e3e6da);
	}

	.tools {
		position: absolute;
		left: 0;
		right: 0;
		bottom: 23px;
		height: 24px;
		border-top: 4px solid #ffe714;
		background: linear-gradient(#d9d566, #e2e093);
		color: #fff;
		font-weight: 600;
		line-height: 26px;
		text-align: center;
		text-shadow: 0 0 2px #8a8734;
	}

	.help {
		display: flex;
		align-items: center;
		gap: 9px;
		margin-left: auto;
		padding-right: 2px;
	}

	.tabs .help button {
		padding: 0;
	}

	.tabs .help .q {
		width: 17px;
		height: 17px;
		justify-content: center;
		border-radius: 50%;
		background: radial-gradient(#5f9af0, #2c62bd);
		color: #fff;
		font-weight: bold;
	}

	/* ribbon */
	.ribbon {
		display: flex;
		height: 86px;
		padding-right: 12px;
		box-sizing: border-box;
		background: linear-gradient(#fff, #fbfcfd 60%, #e5e8ec);
		border-bottom: 1px solid #7f868f;
	}

	.group {
		display: flex;
		flex-direction: column;
		border-right: 1px solid #c3c7cd;
		box-sizing: border-box;
	}

	.clipboard {
		width: 152px;
	}

	.font {
		width: 268px;
	}

	.para {
		width: 282px;
	}

	.styles {
		flex: 1;
		min-width: 0;
	}

	.editing {
		width: 75px;
	}

	.body {
		display: flex;
		flex: 1;
	}

	.group > footer {
		display: flex;
		align-items: center;
		justify-content: center;
		position: relative;
		height: 17px;
		padding-right: 20px;
		color: #6a727d;
	}

	.editing > footer {
		padding: 0;
	}

	.launcher {
		position: absolute;
		right: 6px;
		bottom: 4px;
	}

	.large {
		flex-direction: column;
		width: 48px;
		padding-top: 5px;
		gap: 3px;
	}

	.change {
		line-height: 13px;
	}

	.change .arrow {
		display: inline-block;
		vertical-align: middle;
	}

	.stack {
		display: flex;
		flex-direction: column;
		padding-top: 2px;
	}

	.stack button {
		height: 22px;
		gap: 4px;
	}

	.editing .stack {
		padding-left: 7px;
	}

	.off {
		color: #9a9fa6;
	}

	.rows {
		flex-direction: column;
		padding: 10px 0 0 4px;
		gap: 7px;
	}

	.row {
		display: flex;
		height: 22px;
	}

	.combo {
		display: flex;
		align-items: center;
		height: 22px;
		padding-right: 4px;
		border: 1px solid #c9cdd2;
		box-sizing: border-box;
		background: #fff;
	}

	.combo input {
		width: 100%;
		min-width: 0;
		padding: 0 0 0 2px;
		border: 0;
		background: none;
		font: inherit;
		color: #111;
	}

	.name {
		width: 98px;
	}

	.size {
		width: 43px;
	}

	.tool {
		justify-content: center;
		width: 23px;
		height: 22px;
		box-sizing: border-box;
		color: #111;
	}

	.serif {
		font-family: 'Liberation Serif', serif;
		font-size: 15px;
	}

	.grow {
		font-size: 18px;
	}

	.grow svg,
	.shrink svg {
		margin-bottom: 10px;
	}

	.tool.abc {
		font-size: 12px;
	}

	.script {
		font-size: 13px;
	}

	.tool sub,
	.tool sup {
		font-size: 8px;
		line-height: 8px;
		color: #2f62a8;
	}

	.tool sub {
		padding-top: 8px;
	}

	.tool sup {
		padding-bottom: 8px;
	}

	.split {
		width: 34px;
		gap: 4px;
	}

	.drop {
		width: 13px;
	}

	.on {
		border: 1px solid #c09a3c;
		border-radius: 2px;
		background: linear-gradient(#fbd878, #fee57f);
	}

	.sep {
		width: 1px;
		height: 18px;
		margin: 2px 3px;
		background: #d4d7db;
	}

	.gallery {
		display: flex;
		flex: 1;
		height: 60px;
		margin: 5px 0 0 6px;
		border: 1px solid #c3c7cd;
		box-sizing: border-box;
		background: #fff;
	}

	.style {
		flex: 1 1 0;
		min-width: 0;
		flex-direction: column;
		justify-content: flex-end;
		gap: 5px;
		height: 56px;
		margin-top: 1px;
		padding-bottom: 3px;
		border: 2px solid transparent;
		box-sizing: border-box;
	}

	.picked {
		border-color: #e8b93c;
		border-radius: 3px;
		box-shadow: inset 0 0 0 2px #fbe38a;
	}

	.look {
		display: flex;
		justify-content: flex-end;
		width: 54px;
		overflow: hidden;
		font-family: 'Liberation Serif', serif;
		font-size: 18px;
		line-height: 20px;
		color: #000;
	}

	.italic {
		font-style: italic;
	}

	.bold {
		font-weight: bold;
	}

	.big {
		font-size: 20px;
	}

	.small {
		font-size: 16px;
		justify-content: center;
	}

	.scroller {
		display: flex;
		flex-direction: column;
		width: 14px;
	}

	.scroller button {
		flex: 1;
		justify-content: center;
		border-left: 1px solid #c3c7cd;
		border-bottom: 1px solid #c3c7cd;
	}

	.scroller button:last-child {
		border-bottom: 0;
	}

	/* work area */
	.work {
		display: flex;
		flex: 1;
		min-height: 0;
		background: linear-gradient(#cdd1d6, #b8bbc1);
	}

	.side {
		display: flex;
		flex-direction: column;
		width: 25px;
		background: #cdd1d6;
	}

	.corner {
		display: flex;
		align-items: center;
		justify-content: center;
		width: 24px;
		height: 23px;
		margin: 3px 0 0;
		border: 1px solid #868d97;
		box-sizing: border-box;
	}

	.corner span {
		width: 14px;
		height: 14px;
		border: 1px solid #868d97;
		box-sizing: border-box;
		background:
			linear-gradient(#444, #444) 4px 3px / 2px 6px no-repeat,
			linear-gradient(#444, #444) 4px 7px / 5px 2px no-repeat,
			#fff;
	}

	.vruler {
		margin-left: 5px;
		overflow: hidden;
	}

	.desk {
		display: flex;
		flex-direction: column;
		flex: 1;
		min-width: 0;
	}

	.rulerrow {
		display: grid;
		grid-template-columns: 1143px;
		justify-content: center;
		height: 27px;
		background: #cdd1d6;
	}

	.hruler {
		margin-top: 4px;
	}

	.pages {
		display: grid;
		grid-template-columns: repeat(4, 282px);
		gap: 5px;
		justify-content: center;
		align-content: start;
		flex: 1;
		min-height: 0;
		overflow: hidden;
	}

	.page {
		display: flex;
		flex-direction: column;
		min-height: 350px;
		padding: 3px 43px 16px;
		box-sizing: border-box;
		background: #fff;
		box-shadow: 0 0 5px 2px #70767c;
		font-family: 'Liberation Serif', 'DejaVu Sans', serif;
		font-size: 6px;
		line-height: 16px;
		color: #000;
	}

	.next {
		padding-top: 37px;
	}

	.tabled {
		padding-top: 35px;
	}

	.page > footer {
		margin-top: auto;
		text-align: center;
		color: #666;
	}

	.page p {
		direction: rtl;
		white-space: nowrap;
		text-align-last: justify;
		height: 16px;
	}

	.page .text p:nth-child(even) {
		height: 17px;
	}

	.page p.end {
		text-align-last: right;
	}

	.page p.center {
		text-align-last: center;
	}

	.page p.heading {
		font-size: 7px;
		text-align-last: center;
	}

	.page p.heading.end {
		text-align-last: right;
	}

	.page em {
		display: inline-block;
		direction: ltr;
		font-style: normal;
		color: #999;
	}

	.compare {
		margin-top: 66px;
	}

	.after {
		margin-top: 3px;
	}

	.first {
		margin-top: 1px;
	}

	.second {
		margin-top: 18px;
	}

	.grid {
		width: 207px;
		margin-left: -8px;
		border-collapse: collapse;
		table-layout: fixed;
		text-align: center;
	}

	.grid td,
	.grid th {
		padding: 0;
		border: 1px solid #000;
		font-weight: normal;
		line-height: 7px;
		vertical-align: top;
		white-space: nowrap;
	}

	.wide {
		width: 258px;
		margin-left: -32px;
		font-size: 5px;
	}

	.grid.wide th {
		white-space: normal;
	}

	.grid.wide .last {
		line-height: 12px;
		white-space: nowrap;
	}

	.tall {
		height: 203px;
	}

	.tall th {
		height: 26px;
	}

	.tall th span {
		writing-mode: vertical-rl;
	}

	.dense {
		height: 267px;
	}

	.dense th {
		height: 20px;
	}

	.grid.dense .last {
		line-height: 10px;
	}

	.c16 {
		width: 16px;
	}

	.c17 {
		width: 17px;
	}

	.c30 {
		width: 30px;
	}

	.c53 {
		width: 53px;
	}

	.caret {
		display: block;
		width: 2px;
		height: 7px;
		margin: 0 auto;
		background: #000;
	}

	.grid.mid td {
		height: 15px;
		vertical-align: middle;
	}

	.grid .math {
		font-size: 6px;
		color: #999;
		vertical-align: middle;
	}

	.years {
		margin-top: 15px;
	}

	.grid.years td {
		height: 16px;
	}

	.grid.score td {
		padding-right: 3px;
		text-align: right;
	}

	.critical {
		height: 221px;
		border: 1px solid #000;
		font-size: 8px;
	}

	.critical th {
		height: 17px;
	}

	.grid.critical th:first-child {
		line-height: 4px;
	}

	.grid.critical td {
		border-top: 0;
		border-bottom: 0;
		line-height: 6px;
	}

	.grid.critical tr:last-child td {
		border-bottom: 1px solid #000;
	}

	.products {
		height: 247px;
	}

	.grid.products td {
		height: 14px;
		line-height: 9px;
	}

	.equations {
		display: grid;
		grid-template-rows: 16px 24px 14px 15px 21px 14px 15px 17px 17px 19px 21px 12px;
		color: #888;
		line-height: 7px;
		white-space: pre;
	}

	.equations div {
		display: flex;
		align-items: center;
	}

	.equations sub,
	.equations sup {
		font-size: 4px;
	}

	.equations q {
		quotes: none;
		font-size: 12px;
	}

	.frac {
		display: flex;
		flex-direction: column;
		margin: 0 1px;
		text-align: center;
	}

	.frac span:first-child {
		border-bottom: 1px solid #000;
	}

	.sum {
		display: flex;
		flex-direction: column;
		align-items: center;
		margin: 0 2px 0 1px;
		line-height: 4px;
	}

	.sum b {
		font-size: 9px;
		line-height: 7px;
		color: #000;
	}

	.sum small {
		font-size: 3px;
		line-height: 3px;
	}

	/* scroll bar */
	.scroll {
		display: flex;
		flex-direction: column;
		align-items: center;
		width: 16px;
		padding-top: 5px;
		box-sizing: border-box;
		background: #dce0e9;
	}

	.splitter {
		width: 9px;
		height: 2px;
		margin-bottom: 3px;
		background: #6b7078;
	}

	.scroll button {
		height: 18px;
	}

	.scroll .browse {
		width: 16px;
		height: 16px;
		border: 1px solid #868d97;
	}

	.track {
		flex: 1;
		width: 100%;
		padding-top: 390px;
		box-sizing: border-box;
	}

	.thumb {
		height: 48px;
		border: 1px solid #868d97;
		border-radius: 2px;
		box-sizing: border-box;
		background:
			repeating-linear-gradient(#7f868f 0 1px, transparent 1px 3px) center / 8px 8px no-repeat,
			linear-gradient(90deg, #fff, #e3e6ea);
	}

	.jump {
		display: flex;
		flex-direction: column;
		align-items: center;
		width: 100%;
		border-top: 1px solid #b4b9c1;
	}

	/* status bar */
	.status {
		display: flex;
		align-items: center;
		height: 21px;
		padding-right: 4px;
		border-top: 1px solid #8b9198;
		box-sizing: border-box;
		background: linear-gradient(#e2e5e9, #bcc0c7);
	}

	.item {
		height: 18px;
		padding: 0 9px;
		border-right: 1px solid #989ea6;
	}

	.lang svg {
		margin-right: 14px;
	}

	.views {
		display: flex;
		margin-left: auto;
		padding-left: 4px;
		border-left: 1px solid #989ea6;
	}

	.view {
		justify-content: center;
		width: 18px;
		height: 19px;
		box-sizing: border-box;
	}

	.percent {
		margin: 0 8px 0 10px;
	}

	input[type='range'] {
		width: 100px;
		height: 16px;
		margin: 0;
		appearance: none;
		background:
			linear-gradient(#7f868f, #7f868f) center / 1px 8px no-repeat,
			linear-gradient(#8b9198, #8b9198) center / 100% 1px no-repeat;
	}

	input[type='range']::-webkit-slider-thumb {
		appearance: none;
		width: 9px;
		height: 13px;
		border: 1px solid #6b7078;
		border-radius: 1px 1px 5px 5px;
		background: #f2f4f6;
	}
</style>
